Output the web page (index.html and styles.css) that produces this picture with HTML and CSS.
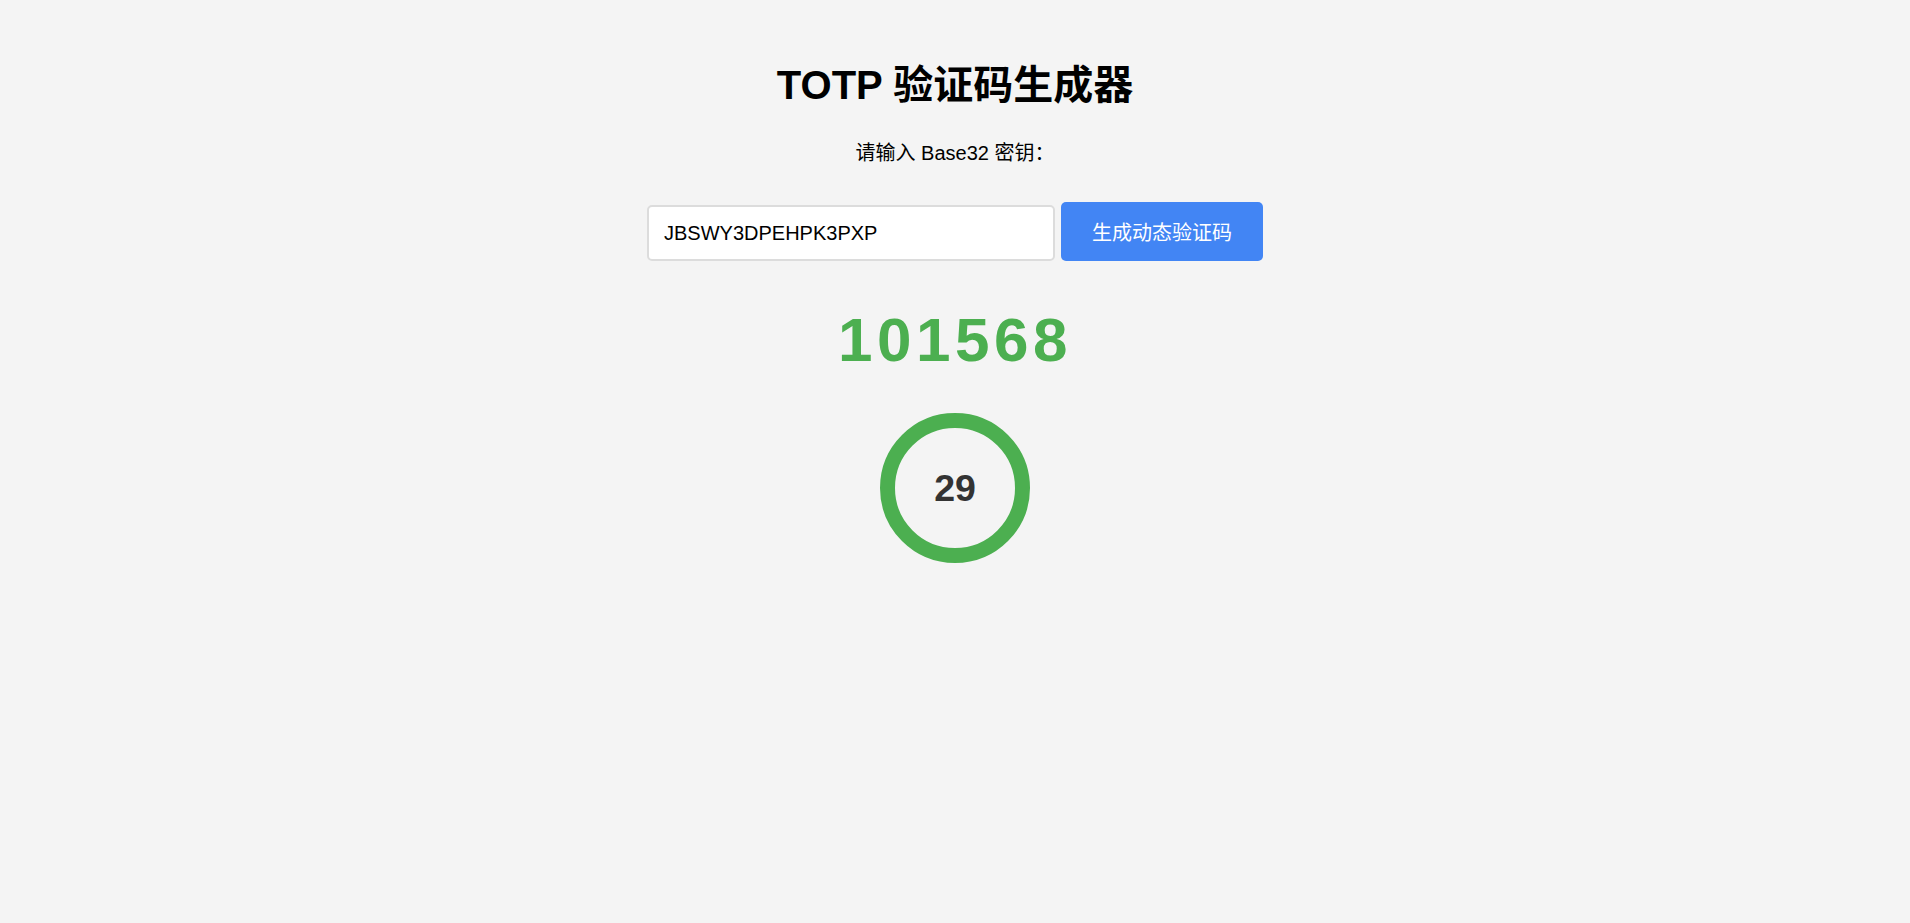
FILE: index.html
```html
<!DOCTYPE html>
<html lang="zh-CN">
<head>
<meta charset="utf-8">
<title>TOTP 验证码生成器</title>
<link rel="stylesheet" href="styles.css">
</head>
<body>
<main class="app">
  <h1 class="title">TOTP 验证码生成器</h1>
  <p class="label">请输入 Base32 密钥：</p>
  <div class="form-row">
    <input class="secret-input" type="text" value="JBSWY3DPEHPK3PXP">
    <button class="generate-btn" type="button">生成动态验证码</button>
  </div>
  <div class="code">101568</div>
  <div class="timer">
    <span class="timer-value">29</span>
  </div>
</main>
</body>
</html>
```

FILE: styles.css
```css
html, body {
  margin: 0;
  padding: 0;
}

body {
  background: #f4f4f4;
  font-family: "Liberation Sans", Arial, "Noto Sans CJK SC", sans-serif;
  color: #000;
}

.app {
  display: flex;
  flex-direction: column;
  align-items: center;
  padding-top: 61px;
}

.title {
  margin: 0;
  font-size: 40px;
  line-height: 48px;
  font-weight: bold;
}

.label {
  margin: 32px 0 0;
  font-size: 20px;
  line-height: 24px;
}

.form-row {
  display: flex;
  align-items: flex-end;
  gap: 6px;
  margin-top: 37px;
}

.secret-input {
  box-sizing: border-box;
  width: 408px;
  height: 56px;
  padding: 0 15px;
  border: 2px solid #dcdcdc;
  border-radius: 5px;
  background: #fff;
  font-family: "Liberation Sans", Arial, sans-serif;
  font-size: 20px;
  color: #000;
  outline: none;
}

.generate-btn {
  box-sizing: border-box;
  width: 202px;
  height: 59px;
  border: none;
  border-radius: 5px;
  background: #4285f4;
  color: #fff;
  font-family: "Liberation Sans", Arial, "Noto Sans CJK SC", sans-serif;
  font-size: 20px;
  padding: 0;
  cursor: pointer;
}

.code {
  margin-top: 48px;
  font-size: 62px;
  line-height: 62px;
  font-weight: bold;
  letter-spacing: 4.5px;
  color: #4caf50;
}

.timer {
  box-sizing: border-box;
  width: 150px;
  height: 150px;
  margin-top: 42px;
  border: 15px solid #4caf50;
  border-radius: 50%;
  display: flex;
  align-items: center;
  justify-content: center;
}

.timer-value {
  font-size: 37.5px;
  font-weight: bold;
  color: #333;
}
```
